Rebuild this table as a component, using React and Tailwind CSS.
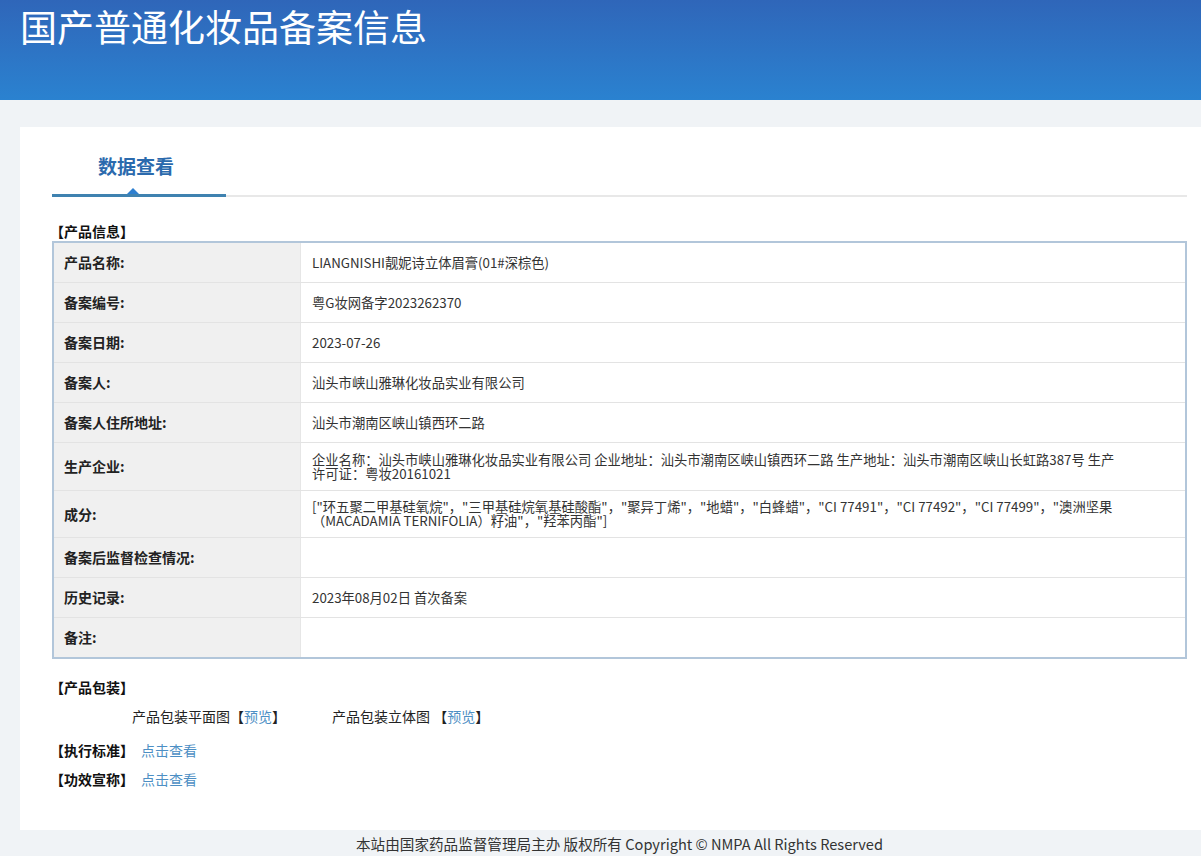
import React from "react";

const rows = [
  { label: "产品名称:", value: "LIANGNISHI靓妮诗立体眉膏(01#深棕色)" },
  { label: "备案编号:", value: "粤G妆网备字2023262370" },
  { label: "备案日期:", value: "2023-07-26" },
  { label: "备案人:", value: "汕头市峡山雅琳化妆品实业有限公司" },
  { label: "备案人住所地址:", value: "汕头市潮南区峡山镇西环二路" },
  {
    label: "生产企业:",
    value:
      "企业名称：汕头市峡山雅琳化妆品实业有限公司 企业地址：汕头市潮南区峡山镇西环二路 生产地址：汕头市潮南区峡山长虹路387号 生产许可证：粤妆20161021",
    h: "h-[48px]",
  },
  {
    label: "成分:",
    value:
      "[\"环五聚二甲基硅氧烷\"，\"三甲基硅烷氧基硅酸酯\"，\"聚异丁烯\"，\"地蜡\"，\"白蜂蜡\"，\"CI 77491\"，\"CI 77492\"，\"CI 77499\"，\"澳洲坚果（MACADAMIA TERNIFOLIA）籽油\"，\"羟苯丙酯\"]",
    h: "h-[47px]",
  },
  { label: "备案后监督检查情况:", value: "" },
  { label: "历史记录:", value: "2023年08月02日 首次备案" },
  { label: "备注:", value: "" },
];

const font = { fontFamily: "'Noto Sans CJK SC', 'Liberation Sans', sans-serif" };

export default function App() {
  return (
    <div className="min-h-[856px] bg-[#f0f3f6] text-[#333]" style={font}>
      {/* Header */}
      <div className="h-[100px] bg-gradient-to-b from-[#2f66b9] to-[#2a82d0] pl-[20px] pt-[5px]">
        <h1 className="text-[37px] leading-[42px] text-white font-normal">
          国产普通化妆品备案信息
        </h1>
      </div>

      {/* Card */}
      <div className="ml-[20px] mt-[27px] bg-white h-[703px] pl-[32px] pr-[14px] pt-[22px]">
        {/* Tab */}
        <div className="relative h-[48px]">
          <div className="w-[174px] text-center pr-[6px] pt-[4px]">
            <span className="text-[19px] leading-[26px] font-bold text-[#2b6aad]">数据查看</span>
          </div>
          <div className="absolute left-0 right-0 bottom-0 h-[2px] bg-[#e8e8e8]" />
          <div className="absolute left-0 w-[174px] bottom-0 h-[3px] bg-[#3f82b0]" />
          <div className="absolute left-[75px] bottom-[3px] w-0 h-0 border-l-[6px] border-r-[6px] border-b-[6px] border-l-transparent border-r-transparent border-b-[#2d7fd0]" />
        </div>

        <div className="mt-[25px] text-[14px] leading-[18px] font-bold text-[#111] -ml-[2px]">【产品信息】</div>

        {/* Table */}
        <div className="mt-[1px] border-2 border-[#b2c6da] w-[1135px]">
          {rows.map((r, i) => (
            <div
              key={i}
              className={`flex ${i > 0 ? "border-t border-[#e3e3e3]" : ""} ${r.h || (i === 0 ? "h-[39px]" : "h-[40px]")}`}
            >
              <div className="w-[247px] shrink-0 bg-[#f0f0f0] border-r border-[#e6e6e6] flex items-center pl-[10px] text-[14px] font-bold text-[#222]">
                {r.label}
              </div>
              <div className="flex-1 flex items-center pl-[11px] pr-[60px] text-[13.3px] leading-[14px] text-[#333]">
                {r.value}
              </div>
            </div>
          ))}
        </div>

        {/* Packaging */}
        <div className="mt-[19px] text-[14px] leading-[18px] font-bold text-[#111] -ml-[2px]">【产品包装】</div>
        <div className="mt-[11px] flex text-[14px] leading-[18px] text-[#222]">
          <div className="ml-[80px]">
            产品包装平面图【<span className="text-[#4d8fc4]">预览</span>】
          </div>
          <div className="ml-[46px]">
            产品包装立体图 【<span className="text-[#4d8fc4]">预览</span>】
          </div>
        </div>
        <div className="mt-[16px] flex text-[14px] leading-[18px] -ml-[2px]">
          <span className="font-bold text-[#111]">【执行标准】</span>
          <span className="ml-[7px] text-[#4d8fc4]">点击查看</span>
        </div>
        <div className="mt-[11px] flex text-[14px] leading-[18px] -ml-[2px]">
          <span className="font-bold text-[#111]">【功效宣称】</span>
          <span className="ml-[7px] text-[#4d8fc4]">点击查看</span>
        </div>
      </div>

      {/* Footer */}
      <div className="h-[27px] flex items-center justify-center pl-[38px] pt-[1px] text-[14.6px] text-[#333]">
        本站由国家药品监督管理局主办 版权所有 Copyright © NMPA All Rights Reserved
      </div>
    </div>
  );
}
